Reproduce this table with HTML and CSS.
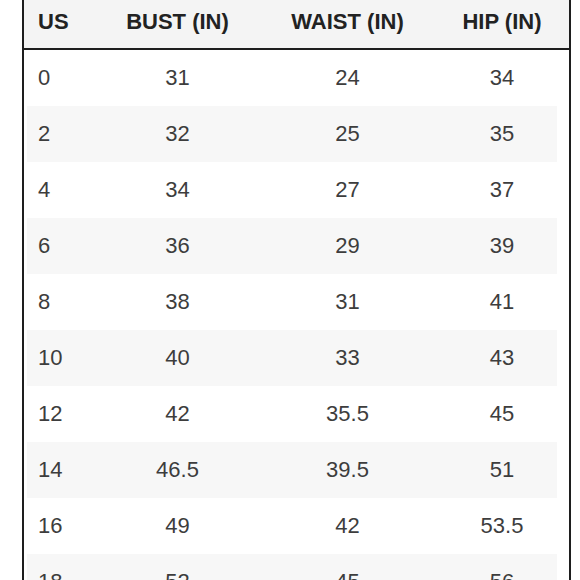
FILE: index.html
```html
<!DOCTYPE html>
<html lang="en">
<head>
<meta charset="utf-8">
<title>Size chart</title>
<link rel="stylesheet" href="styles.css">
</head>
<body>
<div class="chart">
  <div class="row head">
    <div class="cell first">US</div>
    <div class="cell">BUST (IN)</div>
    <div class="cell">WAIST (IN)</div>
    <div class="cell">HIP (IN)</div>
  </div>
  <div class="row"><div class="cell first">0</div><div class="cell">31</div><div class="cell">24</div><div class="cell">34</div></div>
  <div class="row alt"><div class="cell first">2</div><div class="cell">32</div><div class="cell">25</div><div class="cell">35</div></div>
  <div class="row"><div class="cell first">4</div><div class="cell">34</div><div class="cell">27</div><div class="cell">37</div></div>
  <div class="row alt"><div class="cell first">6</div><div class="cell">36</div><div class="cell">29</div><div class="cell">39</div></div>
  <div class="row"><div class="cell first">8</div><div class="cell">38</div><div class="cell">31</div><div class="cell">41</div></div>
  <div class="row alt"><div class="cell first">10</div><div class="cell">40</div><div class="cell">33</div><div class="cell">43</div></div>
  <div class="row"><div class="cell first">12</div><div class="cell">42</div><div class="cell">35.5</div><div class="cell">45</div></div>
  <div class="row alt"><div class="cell first">14</div><div class="cell">46.5</div><div class="cell">39.5</div><div class="cell">51</div></div>
  <div class="row"><div class="cell first">16</div><div class="cell">49</div><div class="cell">42</div><div class="cell">53.5</div></div>
  <div class="row alt"><div class="cell first">18</div><div class="cell">52</div><div class="cell">45</div><div class="cell">56</div></div>
</div>
</body>
</html>
```
FILE: styles.css
```css
html, body {
  margin: 0;
  padding: 0;
  background: #ffffff;
  overflow: hidden;
}

body {
  font-family: "Liberation Sans", Arial, sans-serif;
}

.chart {
  margin-left: 22px;
  width: 545px;
  border-left: 2px solid #1e1e1e;
  border-right: 2px solid #1e1e1e;
}

.row {
  display: grid;
  grid-template-columns: 71px 165px 175px 1fr;
  align-items: center;
  height: 56px;
  font-size: 22px;
  color: #3d3d3d;
}

.row.alt {
  background: linear-gradient(to right, transparent 3px, #f7f7f7 3px, #f7f7f7 calc(100% - 12px), transparent calc(100% - 12px));
}

.row.head {
  height: 43px;
  padding-bottom: 5px;
  background: #f4f4f4;
  border-bottom: 2px solid #1e1e1e;
  font-weight: bold;
  color: #222222;
}

.cell {
  text-align: center;
  white-space: nowrap;
}

.cell.first {
  text-align: left;
  padding-left: 14px;
}
```
